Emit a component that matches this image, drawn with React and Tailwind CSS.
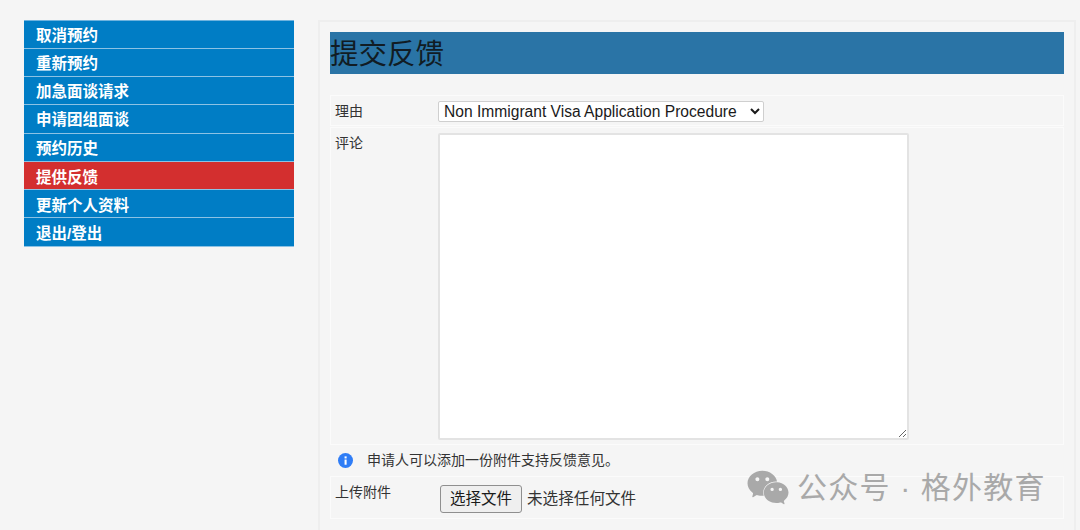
import React from "react";
import { SiWechat } from "react-icons/si";

const items = [
  ["取消预约", "h-[28px] pt-[3px]"],
  ["重新预约", "h-[28px] pt-[3px]"],
  ["加急面谈请求", "h-[28px] pt-[3px]"],
  ["申请团组面谈", "h-[29px] pt-[2px]"],
  ["预约历史", "h-[28px] pt-[3px]"],
  ["提供反馈", "h-[28px] pt-[4px]", true],
  ["更新个人资料", "h-[28px] pt-[4px]"],
  ["退出/登出", "h-[29px] pt-[3px]"],
];

const cjk = "font-['Liberation_Sans','Noto_Sans_CJK_SC',sans-serif]";

export default function App() {
  return (
    <div className={`relative flex h-[530px] w-[1080px] items-start overflow-hidden bg-[#f5f5f5] pt-5 pl-6 ${cjk}`}>
      <nav className="flex w-[270px] flex-col border-t border-[#6fb3de] bg-[#6fb3de]">
        {items.map(([t, h, active]) => (
          <a
            key={t}
            className={`flex ${h} items-center border-b border-[#8cc2e4] pl-3 text-[15.5px] font-bold text-white ${active ? "bg-[#d32f2f]" : "bg-[#007dc5]"}`}
          >
            {t}
          </a>
        ))}
      </nav>

      <main className="ml-6 h-[530px] w-[758px] border-t-2 border-l-2 border-r-2 border-[#eeeeee] px-[10px] pt-[10px]">
        <h1 className="flex h-[42px] w-[734px] items-center bg-[#2a74a6] pt-[3px] text-[28.5px] leading-none font-normal text-[#111c24]">
          提交反馈
        </h1>

        <div className="mt-[21px] w-[734px] text-[14px] text-[#333333]">
          <div className="flex h-[31px] items-center border border-[#fbfbfb] pt-px">
            <label className="w-[107px] pl-[4px]">理由</label>
            <select className="h-[21px] w-[326px] rounded-[2px] border border-[#cfcfcf] bg-white pl-[1px] text-[15.6px] text-[#1a1a1a]">
              <option>Non Immigrant Visa Application Procedure</option>
            </select>
          </div>

          <div className="mt-px flex h-[318px] border border-[#fbfbfb] pt-[5px]">
            <label className="w-[107px] pl-[4px]">评论</label>
            <textarea className="h-[307px] w-[471px] rounded-[2px] border-2 border-[#e3e3e3] bg-white"></textarea>
          </div>

          <div className="flex h-[31px] items-center gap-[14px] pl-[8px]">
            <svg viewBox="0 0 16 16" className="h-[15px] w-[15px]">
              <circle cx="8" cy="8" r="8" fill="#2f7df6" />
              <rect x="7" y="7" width="2.2" height="5.5" fill="#fff" />
              <rect x="7" y="3.6" width="2.2" height="2.2" fill="#fff" />
            </svg>
            <span>申请人可以添加一份附件支持反馈意见。</span>
          </div>

          <div className="flex h-[43px] border border-[#fbfbfb]">
            <label className="w-[107px] pt-[5px] pl-[4px]">上传附件</label>
            <div className="flex items-center pl-[2px] pt-[3px]">
              <button className="h-[28px] w-[82px] rounded-[3px] border border-[#8f8f8f] bg-[#efefef] text-[15.5px] text-[#1a1a1a]">
                选择文件
              </button>
              <span className="ml-[5px] text-[15.6px]">未选择任何文件</span>
            </div>
          </div>
        </div>
      </main>

      <div className="absolute top-[467px] left-[747px] flex items-center text-[#a9a9a9]">
        <SiWechat className="h-[41px] w-[42px]" />
        <span className="ml-[8px] text-[30px] leading-none tracking-[1.2px] whitespace-nowrap">公众号 · 格外教育</span>
      </div>
    </div>
  );
}
